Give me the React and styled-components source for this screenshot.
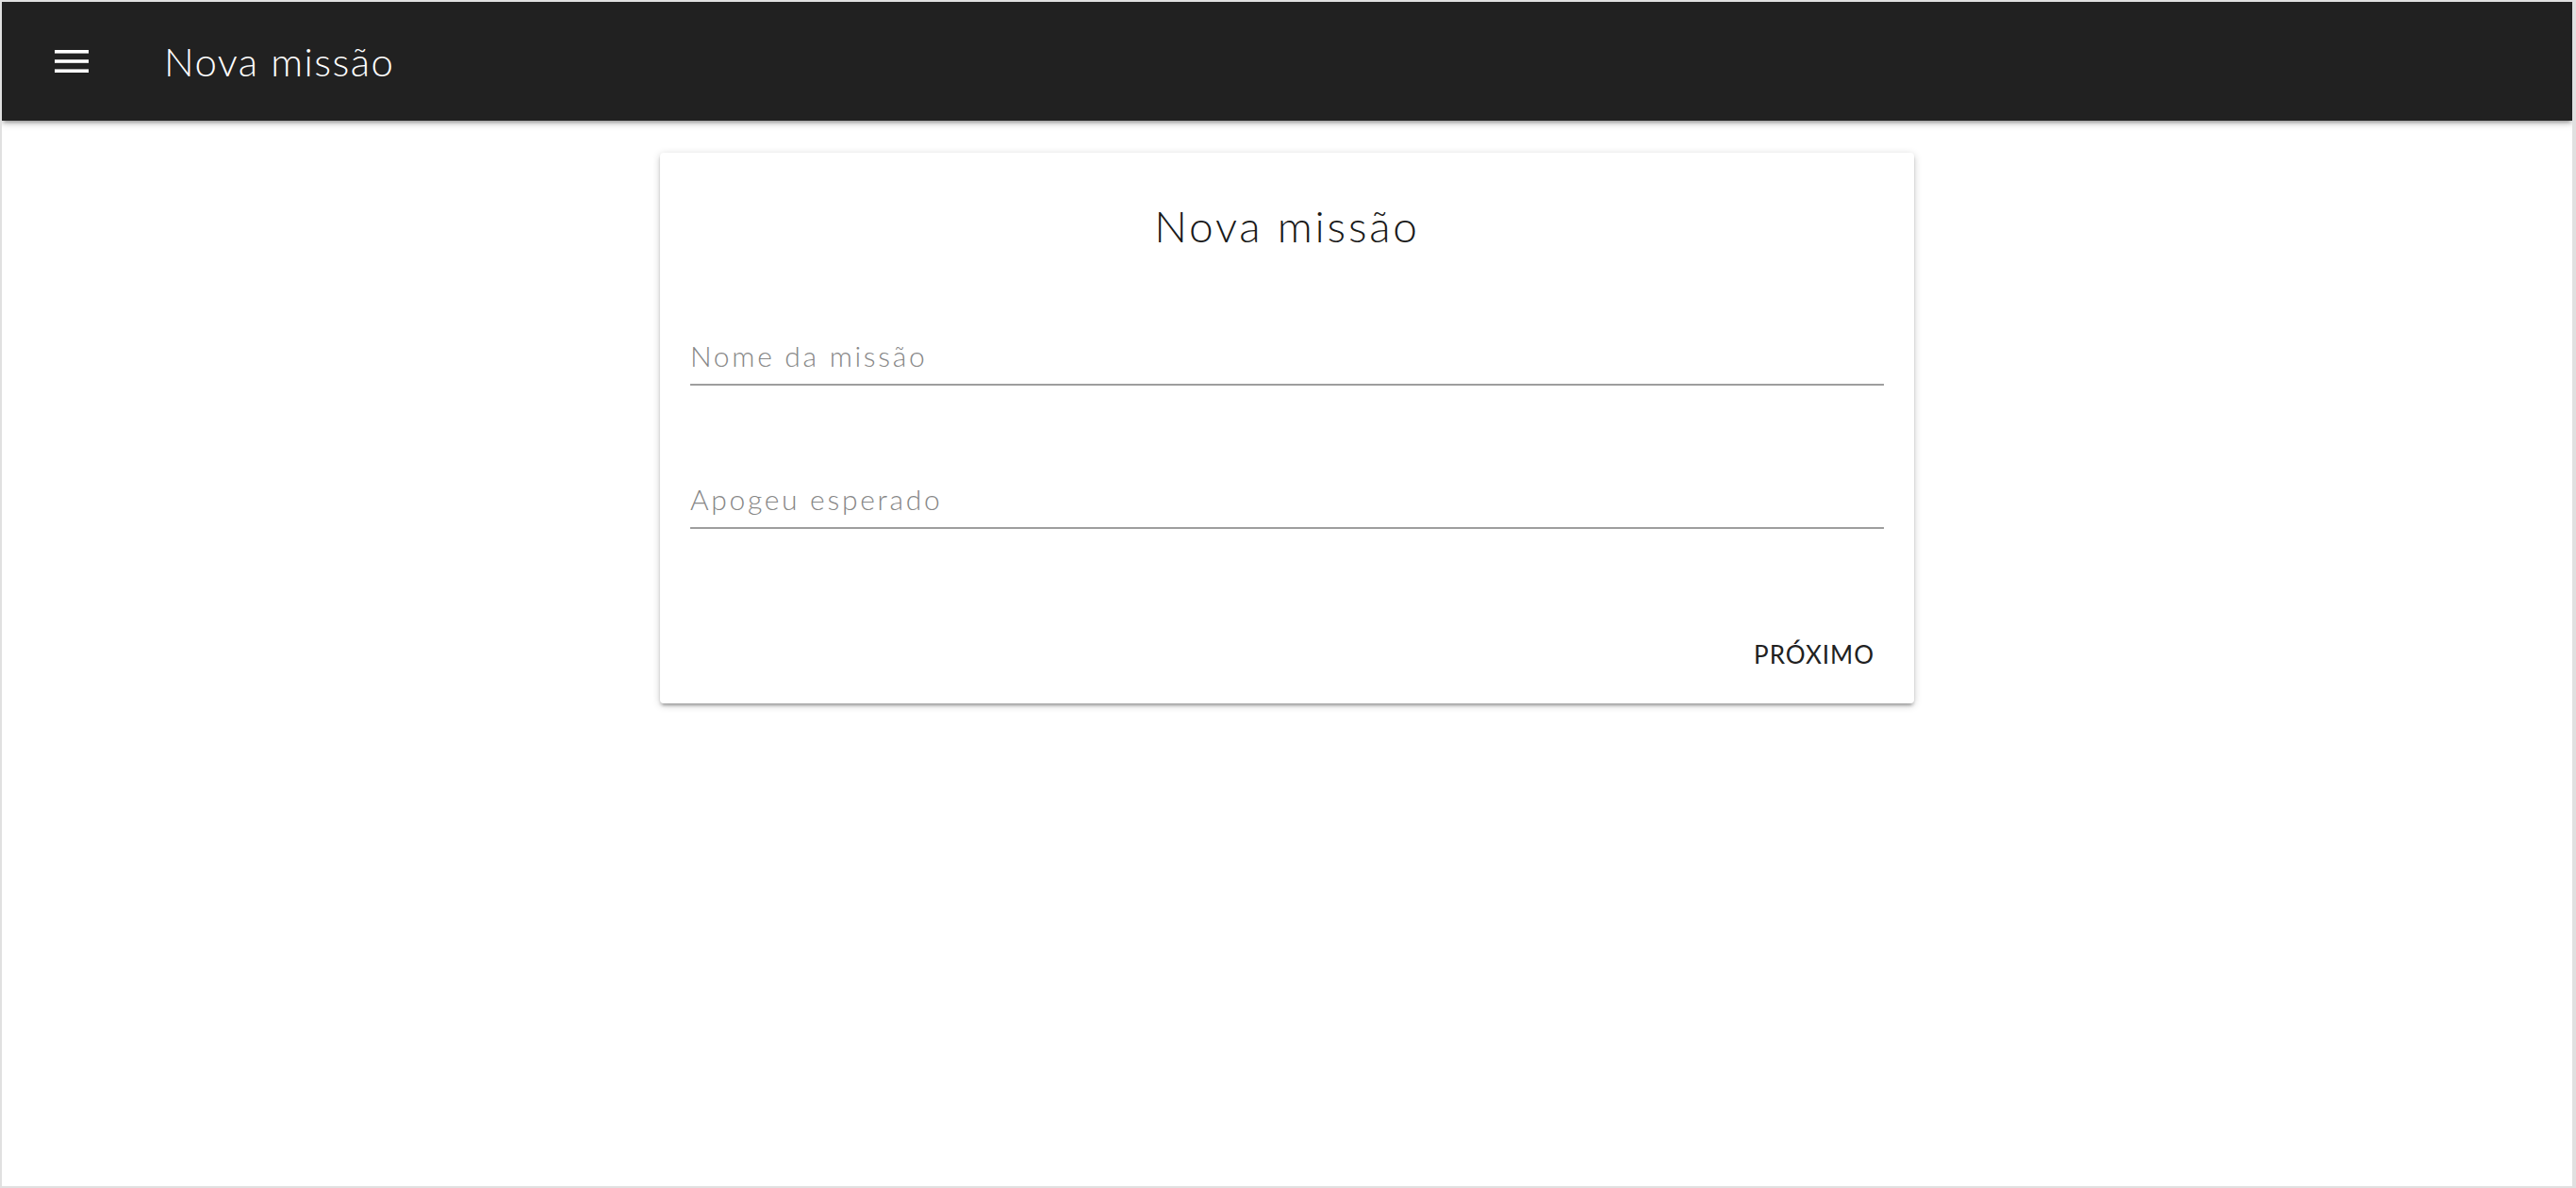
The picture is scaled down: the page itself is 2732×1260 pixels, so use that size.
import React from "react";
import styled, { createGlobalStyle } from "styled-components";

const GlobalStyle = createGlobalStyle`
  html, body {
    margin: 0;
    padding: 0;
    background: #ffffff;
  }
  body {
    font-family: Lato, "Open Sans", sans-serif;
  }
  * { box-sizing: border-box; }
`;

const Frame = styled.div`
  height: 1260px;
  border-style: solid;
  border-color: #e0e0e0;
  border-width: 2px 4px 2px 2px;
  display: flex;
  flex-direction: column;
  background: #ffffff;
  overflow: hidden;
`;

const TopBar = styled.header`
  position: relative;
  z-index: 2;
  height: 126px;
  flex: 0 0 auto;
  background: #212121;
  display: flex;
  align-items: center;
  padding-left: 56px;
  gap: 80px;
  box-shadow: 0 3px 4px 0 rgba(0, 0, 0, 0.14), 0 5px 2px -3px rgba(0, 0, 0, 0.12),
    0 2px 9px 0 rgba(0, 0, 0, 0.2);
`;

const MenuButton = styled.button`
  border: 0;
  background: none;
  padding: 0;
  width: 36px;
  height: 24px;
  display: flex;
  cursor: pointer;
`;

const BarTitle = styled.h1`
  margin: 0;
  font-family: Lato, "Open Sans", sans-serif;
  font-weight: 300;
  font-size: 42px;
  line-height: 1.2;
  color: #ffffff;
  letter-spacing: 1.4px;
`;

const Main = styled.main`
  flex: 1 1 auto;
  display: flex;
  justify-content: center;
  align-items: flex-start;
  padding-top: 34px;
`;

const Card = styled.section`
  width: 1330px;
  background: #ffffff;
  border-radius: 4px;
  padding: 51px 32px 21px;
  display: flex;
  flex-direction: column;
  box-shadow: 0 3px 3px 0 rgba(0, 0, 0, 0.14), 0 5px 2px -3px rgba(0, 0, 0, 0.12),
    0 2px 9px 0 rgba(0, 0, 0, 0.2);
`;

const CardTitle = styled.h2`
  margin: 0;
  text-align: center;
  font-family: Lato, "Open Sans", sans-serif;
  font-weight: 300;
  font-size: 46px;
  line-height: 54px;
  color: #1a1a1a;
  letter-spacing: 2.8px;
`;

const Field = styled.input`
  display: block;
  width: 100%;
  height: 62px;
  margin-top: ${(p) => p.$gap}px;
  padding: 0;
  border: 0;
  border-bottom: 2px solid #9e9e9e;
  outline: none;
  background: transparent;
  font-family: Lato, "Open Sans", sans-serif;
  font-weight: 300;
  font-size: 30px;
  color: #212121;
  letter-spacing: 2.7px;
  &::placeholder {
    color: #878787;
    opacity: 1;
  }
`;

const Actions = styled.div`
  display: flex;
  justify-content: flex-end;
  margin-top: 102px;
`;

const FlatButton = styled.button`
  border: 0;
  background: none;
  height: 62px;
  line-height: 62px;
  padding: 0 10px;
  font-family: Lato, "Open Sans", sans-serif;
  font-size: 26px;
  font-weight: 400;
  letter-spacing: 1px;
  color: #212121;
  text-transform: uppercase;
  cursor: pointer;
`;

function MenuIcon() {
  return (
    <svg width="36" height="24" viewBox="0 0 36 24" aria-hidden="true">
      <rect x="0" y="0" width="36" height="3.6" fill="#ffffff" />
      <rect x="0" y="10.2" width="36" height="3.6" fill="#ffffff" />
      <rect x="0" y="20.4" width="36" height="3.6" fill="#ffffff" />
    </svg>
  );
}

export default function App() {
  return (
    <>
      <GlobalStyle />
      <Frame>
        <TopBar>
          <MenuButton aria-label="menu">
            <MenuIcon />
          </MenuButton>
          <BarTitle>Nova missão</BarTitle>
        </TopBar>
        <Main>
          <Card>
            <CardTitle>Nova missão</CardTitle>
            <Field $gap={80} placeholder="Nome da missão" />
            <Field $gap={90} placeholder="Apogeu esperado" />
            <Actions>
              <FlatButton>Próximo</FlatButton>
            </Actions>
          </Card>
        </Main>
      </Frame>
    </>
  );
}
